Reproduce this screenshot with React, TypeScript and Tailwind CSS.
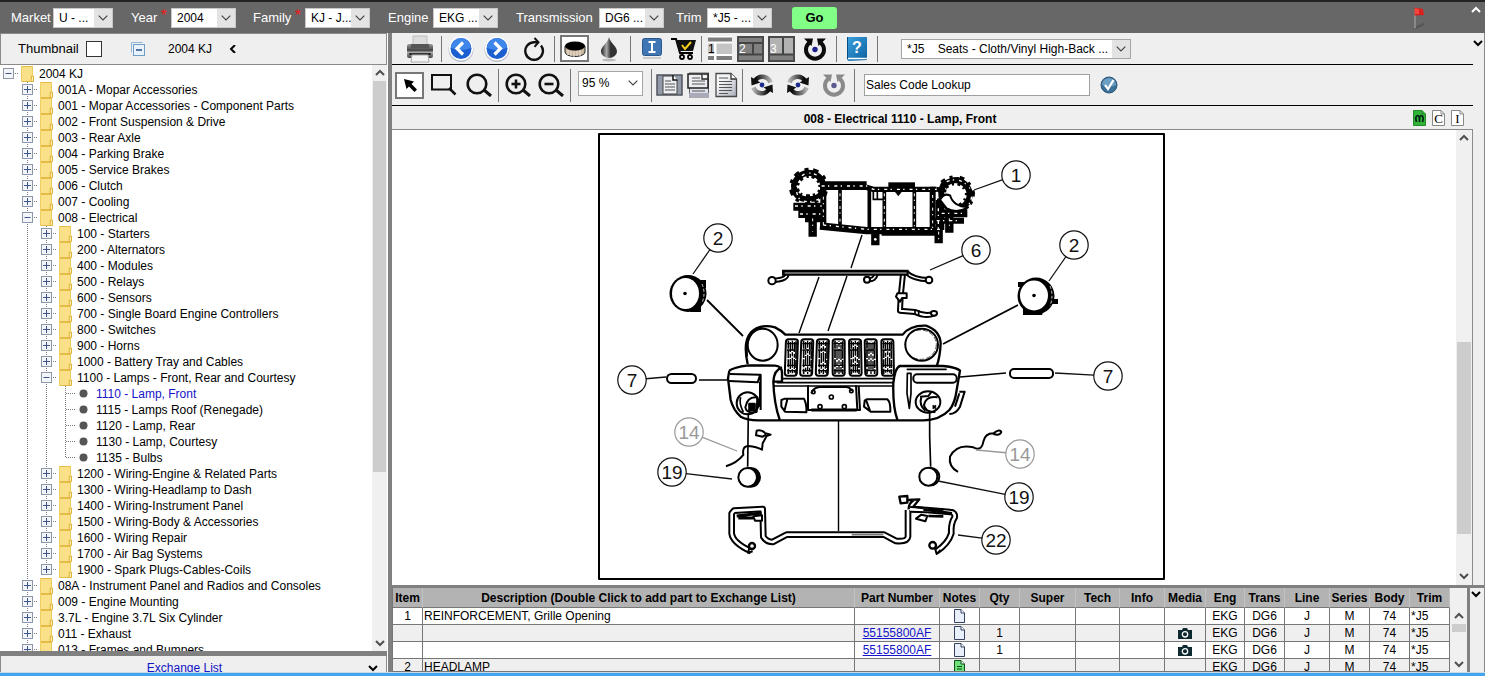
import React from "react";
import clsx from "clsx";

/* ---------- small shared pieces ---------- */

function Chevron({ dir, className }: { dir: "up" | "down" | "left"; className?: string }) {
  const d = dir === "up" ? "M1 6 L5 2 L9 6" : dir === "down" ? "M1 2 L5 6 L9 2" : "M7 0 L3 4 L7 8";
  return (
    <svg viewBox="0 0 10 8" className={clsx("h-2 w-[10px] shrink-0", className)} fill="none" stroke="currentColor" strokeWidth="2">
      <path d={d} />
    </svg>
  );
}

function Select({ label, value, className, plain, outlined }: { label: string; value: string; className: string; plain?: boolean; outlined?: boolean }) {
  return (
    <div className={clsx("relative shrink-0", className)}>
      <select
        id={label}
        aria-label={label}
        className={clsx(
          "h-full w-full appearance-none rounded-none border bg-white whitespace-pre",
          plain ? "pr-5 pl-[3px]" : "pr-4 pl-[5px]",
          plain || outlined ? "border-[#a5a5a5]" : "border-[#c8c8c8]"
        )}
      >
        <option>{value}</option>
      </select>
      <span
        className={clsx(
          "pointer-events-none absolute inset-y-px right-px flex w-[18px] items-center justify-center text-[#444]",
          plain ? "bg-white" : "bg-[#e3e3e3]"
        )}
      >
        <svg viewBox="0 0 10 6" className="h-[6px] w-[10px]" fill="none" stroke="currentColor" strokeWidth="1.2">
          <path d="M.7 .7 L5 5 L9.300 .7" />
        </svg>
      </span>
    </div>
  );
}

function Sep({ className }: { className: string }) {
  return <span className={clsx("w-px shrink-0 bg-[#777]", className)} />;
}

function Tool({ label, className, children }: { label: string; className: string; children: React.ReactNode }) {
  return (
    <button type="button" aria-label={label} className={clsx("flex shrink-0 items-center justify-center", className)}>
      {children}
    </button>
  );
}

/* ---------- filter bar ---------- */

const filters = [
  { label: "Market", value: "U - ...", text: "w-[42px]", box: "w-[60px]", gap: "ml-[11px]", req: false },
  { label: "Year", value: "2004", text: "w-[40px]", box: "w-[65px]", gap: "ml-[18px]", req: true },
  { label: "Family", value: "KJ - J...", text: "w-[52px]", box: "w-[65px]", gap: "ml-[17px]", req: true },
  { label: "Engine", value: "EKG ...", text: "w-[45px]", box: "w-[65px]", gap: "ml-[18px]", req: false },
  { label: "Transmission", value: "DG6 ...", text: "w-[83px]", box: "w-[65px]", gap: "ml-[18px]", req: false },
  { label: "Trim", value: "*J5 - ...", text: "w-[31px]", box: "w-[65px]", gap: "ml-3", req: false },
];

function FilterBar() {
  return (
    <header className="flex h-[33px] shrink-0 items-center border-t-2 border-[#222] bg-[#676767] text-white">
      {filters.map((f) => (
        <div key={f.label} className={clsx("flex items-center", f.gap)}>
          <label htmlFor={f.label} className={clsx("flex h-4 justify-between pr-1 text-[13px] leading-4 whitespace-nowrap", f.text)}>
            {f.label}
            {f.req && <span className="text-base leading-3 text-[#f01818]">*</span>}
          </label>
          <Select label={f.label} value={f.value} className={clsx("h-5 text-xs text-black", f.box)} />
        </div>
      ))}
      <button type="button" className="ml-5 h-[22px] w-[45px] rounded-[3px] bg-[#82ff86] text-[13px] font-bold text-black">
        Go
      </button>
      <button type="button" aria-label="Flag" className="mr-11 ml-auto">
        <svg viewBox="0 0 16 26" className="h-[26px] w-4">
          <path d="M4 23 L13 19" stroke="#555" strokeWidth="2" />
          <rect x="3" y="4" width="2" height="19" fill="#8a8a8a" />
          <path d="M3.500 2.500 L12 4 L13 10 L3.500 10.500 Z" fill="#d8201c" />
          <path d="M4 3 L8 4 L8 9 L4 9Z" fill="#f0443c" />
        </svg>
      </button>
      <button type="button" aria-label="Collapse" className="mr-1 mb-4">
        <Chevron dir="up" />
      </button>
    </header>
  );
}

/* ---------- catalogue tree ---------- */

type Row = { d: number; t: string; open?: boolean; last?: boolean; active?: boolean };
const rows: Row[] = [
  { d: 0, t: "2004 KJ", open: true },
  { d: 1, t: "001A - Mopar Accessories" },
  { d: 1, t: "001 - Mopar Accessories - Component Parts" },
  { d: 1, t: "002 - Front Suspension & Drive" },
  { d: 1, t: "003 - Rear Axle" },
  { d: 1, t: "004 - Parking Brake" },
  { d: 1, t: "005 - Service Brakes" },
  { d: 1, t: "006 - Clutch" },
  { d: 1, t: "007 - Cooling" },
  { d: 1, t: "008 - Electrical", open: true },
  { d: 2, t: "100 - Starters" },
  { d: 2, t: "200 - Alternators" },
  { d: 2, t: "400 - Modules" },
  { d: 2, t: "500 - Relays" },
  { d: 2, t: "600 - Sensors" },
  { d: 2, t: "700 - Single Board Engine Controllers" },
  { d: 2, t: "800 - Switches" },
  { d: 2, t: "900 - Horns" },
  { d: 2, t: "1000 - Battery Tray and Cables" },
  { d: 2, t: "1100 - Lamps - Front, Rear and Courtesy", open: true },
  { d: 3, t: "1110 - Lamp, Front", active: true },
  { d: 3, t: "1115 - Lamps Roof (Renegade)" },
  { d: 3, t: "1120 - Lamp, Rear" },
  { d: 3, t: "1130 - Lamp, Courtesy" },
  { d: 3, t: "1135 - Bulbs", last: true },
  { d: 2, t: "1200 - Wiring-Engine & Related Parts" },
  { d: 2, t: "1300 - Wiring-Headlamp to Dash" },
  { d: 2, t: "1400 - Wiring-Instrument Panel" },
  { d: 2, t: "1500 - Wiring-Body & Accessories" },
  { d: 2, t: "1600 - Wiring Repair" },
  { d: 2, t: "1700 - Air Bag Systems" },
  { d: 2, t: "1900 - Spark Plugs-Cables-Coils", last: true },
  { d: 1, t: "08A - Instrument Panel and Radios and Consoles" },
  { d: 1, t: "009 - Engine Mounting" },
  { d: 1, t: "3.7L - Engine 3.7L Six Cylinder" },
  { d: 1, t: "011 - Exhaust" },
  { d: 1, t: "013 - Frames and Bumpers" },
];

const dots = { stroke: "#777", strokeWidth: 1, strokeDasharray: "1 1" };

function TreeRow({ row }: { row: Row }) {
  const leaf = row.d === 3;
  return (
    <li className="flex h-4 items-center">
      {Array.from({ length: row.d }, (_, i) => (
        <svg key={i} viewBox="0 0 19 16" className="h-4 w-[19px] shrink-0">
          {i > 0 && <path d="M8.500 0 V16" {...dots} />}
        </svg>
      ))}
      <svg viewBox="0 0 19 16" className="h-4 w-[19px] shrink-0" fill="none">
        {row.d > 0 && <path d={row.last ? "M8.500 0 V8" : "M8.500 0 V16"} {...dots} />}
        <path d="M9 7.500 H19" {...dots} />
        {!leaf && (
          <>
            <rect x="3.500" y="2.500" width="10" height="10" fill="#f3f5f8" stroke="#8c98a8" />
            <path d={row.open ? "M5.500 7.500 H11.500" : "M5 7.500 H12 M8.500 4 V11"} stroke="#3c568a" />
          </>
        )}
      </svg>
      {leaf ? (
        <svg viewBox="0 0 20 16" className="h-4 w-5 shrink-0">
          <circle cx="7.500" cy="7.500" r="4" fill="#555" />
        </svg>
      ) : (
        <svg viewBox="0 0 20 16" className="h-4 w-5 shrink-0">
          <rect x="2" y="0" width="12" height="15.500" fill="#fbe08a" />
          <path d="M2 .5 H14 M2 15.500 H14" stroke="#e3bd45" />
          <path d="M2.500 0 V16" stroke="#f0cf62" />
          <path d="M12 15.500 L12.500 10 L14.500 10 V15.500 Z" fill="#fdeeb4" stroke="#dcb236" />
          <path d="M13.500 0 V10" stroke="#ecca5c" />
        </svg>
      )}
      <a href="#tree" className={clsx("whitespace-nowrap", row.active ? "text-[#1414c8]" : "text-black")}>
        {row.t}
      </a>
    </li>
  );
}

function Sidebar() {
  return (
    <aside className="flex w-[387px] shrink-0 flex-col">
      <div className="flex h-8 shrink-0 items-center border border-[#8a8a8a] bg-[#efefef] pl-[17px] text-[13px]">
        <label htmlFor="thumb" className="w-[68px] text-[13px]">Thumbnail</label>
        <input id="thumb" type="checkbox" className="size-4 appearance-none border border-[#333] bg-white" />
        <button type="button" aria-label="Collapse all" className="ml-[29px]">
          <svg viewBox="0 0 14 14" className="size-[14px]" fill="none">
            <path d="M.5 10.500 V.5 H11.500" stroke="#8fb8d8" />
            <rect x="2.500" y="2.500" width="11" height="11" fill="#e8f3fb" stroke="#6f9fc6" />
            <path d="M5 8 H11" stroke="#1f4d8a" strokeWidth="1.500" />
          </svg>
        </button>
        <span className="ml-[23px] w-[60px] text-xs">2004 KJ</span>
        <button type="button" aria-label="Hide tree">
          <Chevron dir="left" />
        </button>
      </div>
      <div className="flex min-h-0 flex-1">
        <ul className="min-w-0 flex-1 overflow-hidden bg-white pt-px text-xs">
          {rows.map((r) => (
            <TreeRow key={r.t} row={r} />
          ))}
        </ul>
        <div className="flex w-[15px] shrink-0 flex-col items-center bg-[#f0f0f0] text-[#505050]">
          <Chevron dir="up" className="my-1" />
          <div className="w-[13px] basis-[391px] bg-[#cdcdcd]" />
          <Chevron dir="down" className="mt-auto mb-1" />
        </div>
      </div>
      <div className="h-[5px] shrink-0 bg-[#808080]" />
      <div className="flex h-4 shrink-0 items-start overflow-hidden border-x border-[#8a8a8a] bg-[#efefef] pr-2 text-xs">
        <a href="#exchange" className="flex-1 pt-1 text-center leading-4 text-[#1414c8]">
          Exchange List
        </a>
        <button type="button" aria-label="Expand list" className="pt-2">
          <Chevron dir="down" />
        </button>
      </div>
    </aside>
  );
}

/* ---------- toolbar icons ---------- */

function RoundArrow({ flip }: { flip?: boolean }) {
  return (
    <svg viewBox="0 0 26 26" className="size-[26px]">
      <circle cx="13" cy="13.500" r="12.500" fill="#b9c0cc" />
      <circle cx="13" cy="12.500" r="12" fill="#fff" />
      <circle cx="13" cy="12.500" r="10.500" fill="#1c5fd0" />
      <path d="M3 12 A10 10 0 0 1 23 12 Q13 16 3 12Z" fill="#3f86ea" />
      <path d={flip ? "M10.500 6.500 L16.500 12.500 L10.500 18.500" : "M15 6.500 L9 12.500 L15 18.500"} fill="none" stroke="#fff" strokeWidth="3.200" />
    </svg>
  );
}

function UTurn({ color, dot }: { color: string; dot: string }) {
  return (
    <svg viewBox="0 0 24 24" className="size-6">
      <path d="M6 6 A9 9 0 1 0 18 6" fill="none" stroke={color} strokeWidth="4" />
      <path d="M1 1.500 H10 L8.500 9 Z M23 1.500 H14 L15.500 9 Z" fill={color} />
      <circle cx="12" cy="12.500" r="2.700" fill={dot} />
    </svg>
  );
}

function TwinTurn({ cw, id }: { cw?: boolean; id: string }) {
  return (
    <svg viewBox="0 0 24 24" className="size-6">
      <defs>
        <linearGradient id={id} x1="0" x2="1">
          <stop offset="0" stopColor="#000" />
          <stop offset="1" stopColor="#b0b0b0" />
        </linearGradient>
        <linearGradient id={id + "b"} x1="0" x2="1">
          <stop offset="0" stopColor="#b0b0b0" />
          <stop offset="1" stopColor="#000" />
        </linearGradient>
      </defs>
      <g transform={cw ? "translate(24 0) scale(-1 1)" : undefined}>
        <path d="M5 8 A8.500 8.500 0 0 1 20.500 9.500" fill="none" stroke={`url(#${id})`} strokeWidth="4.500" />
        <path d="M1 4 L1.500 12.500 L10.500 9.500 Z" fill="#111" />
        <path d="M19 16 A8.500 8.500 0 0 1 3.500 14.500" fill="none" stroke={`url(#${id}b)`} strokeWidth="4.500" />
        <path d="M23 20 L22.500 11.500 L13.500 14.500 Z" fill="#111" />
      </g>
      <circle cx="12" cy="12" r="2.400" fill="#1c2c8c" />
    </svg>
  );
}

function Lens({ sign }: { sign?: "plus" | "minus" }) {
  return (
    <svg viewBox="0 0 26 24" className="h-6 w-[26px]" fill="none" stroke="#111" strokeWidth="2.600">
      <circle cx="11" cy="11" r="9.300" />
      <path d="M18 17 L25 23" strokeWidth="3" />
      {sign && <path d="M6.500 11 H15.500" />}
      {sign === "plus" && <path d="M11 6.500 V15.500" />}
    </svg>
  );
}

function DocWide() {
  return (
    <svg viewBox="0 0 27 24" className="h-6 w-[27px]" fill="none">
      <rect x="1" y="2" width="25" height="20" fill="#9299a8" stroke="#50545c" strokeWidth="1.500" />
      <path d="M7 3 H17 L21 7 V21 H7Z" fill="#eceef2" stroke="#444" />
      <path d="M17 2 V7 H21.500" fill="#fff" stroke="#111" strokeWidth="1.500" />
      <path d="M9 8 H15 M9 11 H19 M9 14 H19 M9 17 H19" stroke="#555" strokeWidth="1.200" />
    </svg>
  );
}

function DocTall() {
  return (
    <svg viewBox="0 0 23 26" className="h-[26px] w-[23px]" fill="none">
      <rect x="2.500" y="1" width="19" height="24" fill="#dfe1e8" stroke="#666" />
      <path d="M2 21 H22 V25 H2Z" fill="#aab" />
      <path d="M1 2 H21 V16 H1Z" fill="#eceef2" stroke="#222" strokeWidth="1.500" />
      <path d="M15 2 V7 H21" fill="#fff" stroke="#222" strokeWidth="1.300" />
      <path d="M5 6 H13 M5 9 H18 M5 12 H18 M5 19 H18" stroke="#555" strokeWidth="1.200" />
    </svg>
  );
}

function DocPage() {
  return (
    <svg viewBox="0 0 24 26" className="h-[26px] w-6" fill="none">
      <defs>
        <linearGradient id="pg" x2="1" y2="1">
          <stop offset=".3" stopColor="#f6f7f9" />
          <stop offset="1" stopColor="#a9aebb" />
        </linearGradient>
      </defs>
      <path d="M2 1.500 H17 L22.500 7 V24.500 H2Z" fill="url(#pg)" stroke="#4a4a4a" strokeWidth="1.300" />
      <path d="M17 1.500 V7 H22.500" fill="#fff" stroke="#333" strokeWidth="1.300" />
      <path d="M5 6 H14 M5 9.500 H18 M5 12.500 H18 M5 15.500 H18 M5 18.500 H18 M5 21.500 H14" stroke="#555" />
    </svg>
  );
}

function ToolbarOne() {
  return (
    <div className="flex h-8 shrink-0 items-center border-b border-black">
      <Tool label="Print" className="ml-[14px] w-7">
        <svg viewBox="0 0 28 28" className="size-7">
          <defs>
            <linearGradient id="pr" x2="0" y2="1">
              <stop offset="0" stopColor="#999" />
              <stop offset=".45" stopColor="#444" />
              <stop offset=".6" stopColor="#aaa" />
              <stop offset="1" stopColor="#444" />
            </linearGradient>
          </defs>
          <path d="M7 1 H21 V11 H7Z" fill="#ddd" stroke="#bbb" />
          <rect x="1" y="9" width="26" height="14" rx="2" fill="url(#pr)" />
          <path d="M5 9 H23 V13 H5Z" fill="#555" />
          <path d="M3 19 H25" stroke="#333" strokeWidth="2" />
          <path d="M6 20 H22 L23 27 H5Z" fill="#f4f4f4" stroke="#aaa" />
        </svg>
      </Tool>
      <Sep className="ml-[7px] h-[26px]" />
      <Tool label="Back" className="ml-[6px]"><RoundArrow /></Tool>
      <Tool label="Forward" className="ml-[10px]"><RoundArrow flip /></Tool>
      <Tool label="Reload" className="ml-[13px]">
        <svg viewBox="0 0 22 24" className="h-6 w-[22px]" fill="none" stroke="#111" strokeWidth="2.400">
          <path d="M18 8.500 A8.800 8.800 0 1 1 10.500 5.200 L15 5.200" />
          <path d="M11.500 1 L15.500 5.200 L11.500 9.800" strokeWidth="2" />
        </svg>
      </Tool>
      <Sep className="ml-[9px] h-[26px]" />
      <Tool label="Filters" className="ml-[5px] h-[27px] w-[29px] border-2 border-[#777] bg-white">
        <svg viewBox="0 0 24 18" className="h-[18px] w-6">
          <path d="M2 6 V12 A10 4.500 0 0 0 22 12 V6Z" fill="#c9b79f" stroke="#222" />
          <path d="M5 10 V15 M8 11 V16 M11 11 V17 M14 11 V16 M17 10 V16" stroke="#f2e9dc" />
          <ellipse cx="12" cy="6" rx="10" ry="4.500" fill="#000" />
        </svg>
      </Tool>
      <Tool label="Fluids" className="ml-[11px] w-[18px]">
        <svg viewBox="0 0 18 26" className="h-[26px] w-[18px]">
          <defs>
            <linearGradient id="dr" x2="1">
              <stop offset="0" stopColor="#222" />
              <stop offset=".35" stopColor="#aaa" />
              <stop offset=".6" stopColor="#333" />
            </linearGradient>
          </defs>
          <ellipse cx="9" cy="24" rx="7" ry="1.500" fill="#bbb" />
          <path d="M9 1 C10 7 17 10 17 15.500 A8 6.500 0 0 1 1 15.500 C1 10 8 7 9 1Z" fill="url(#dr)" />
        </svg>
      </Tool>
      <Sep className="ml-3 h-[26px]" />
      <Tool label="Information" className="ml-[11px] w-5">
        <svg viewBox="0 0 20 24" className="h-6 w-5">
          <rect x="1" y="20" width="18" height="2" fill="#ccc" />
          <rect x=".5" y="1.500" width="19" height="17" rx="2" fill="#4076b4" stroke="#2b578f" />
          <path d="M6.500 5 H13.500 M10 5 V15 M6.500 15 H13.500" stroke="#fff" strokeWidth="2" fill="none" />
        </svg>
      </Tool>
      <Tool label="Cart" className="ml-[9px] w-[26px]">
        <svg viewBox="0 0 26 24" className="h-6 w-[26px]">
          <path d="M0 2 H5 L9 16 H22" fill="none" stroke="#000" strokeWidth="2" />
          <path d="M5 3 H25 L22 14 H8Z" fill="#111" />
          <path d="M11 8 L14 12 L20 5" fill="none" stroke="#f4d020" strokeWidth="2" />
          <circle cx="11" cy="20" r="2" fill="#fff" stroke="#000" strokeWidth="1.800" />
          <circle cx="19" cy="20" r="2" fill="#fff" stroke="#000" strokeWidth="1.800" />
        </svg>
      </Tool>
      <Sep className="ml-1 h-[26px]" />
      <Tool label="Layout 1" className="ml-[6px] w-6">
        <svg viewBox="0 0 24 26" className="h-[26px] w-6">
          <rect width="24" height="26" fill="#fff" />
          <path d="M0 1.500 H24 V5.500 H0Z M0 20 H6 V24 H0Z M8.500 20 H24 V24 H8.500Z" fill="#7d7d7d" />
          <path d="M0 7.500 H6 V18 H0Z M8.500 7.500 H24 V18 H8.500Z" fill="#c4c4c4" />
          <text x="0" y="17" fontSize="12" fontFamily="Liberation Sans">1</text>
        </svg>
      </Tool>
      <Tool label="Layout 2" className="ml-[5px] w-[27px]">
        <svg viewBox="0 0 27 26" className="h-[26px] w-[27px]">
          <rect x="1" y="1" width="25" height="24" fill="#808080" stroke="#4a4a4a" strokeWidth="2" />
          <path d="M2 7 H25 M2 18.500 H25 M16 7 V18.500" stroke="#444" strokeWidth="2" />
          <text x="2" y="17" fontSize="12" fill="#fff" fontFamily="Liberation Sans">2</text>
        </svg>
      </Tool>
      <Tool label="Layout 3" className="ml-1 w-[27px]">
        <svg viewBox="0 0 27 26" className="h-[26px] w-[27px]">
          <rect x="1" y="1" width="25" height="24" fill="#b2b2b2" stroke="#4a4a4a" strokeWidth="2" />
          <path d="M2 19 H25 V24 H2Z" fill="#808080" />
          <path d="M2 18.500 H25 M15 2 V18.500" stroke="#444" strokeWidth="2" />
          <text x="2" y="17" fontSize="12" fill="#fff" fontFamily="Liberation Sans">3</text>
        </svg>
      </Tool>
      <Tool label="Reset layout" className="ml-2"><UTurn color="#0c0c0c" dot="#20208c" /></Tool>
      <Sep className="ml-[9px] h-[26px]" />
      <Tool label="Help" className="ml-[9px] w-[22px]">
        <svg viewBox="0 0 22 26" className="h-[26px] w-[22px]">
          <defs>
            <linearGradient id="hp" x2="1" y2="1">
              <stop offset="0" stopColor="#3da2de" />
              <stop offset="1" stopColor="#0b5f9f" />
            </linearGradient>
          </defs>
          <path d="M1 1 H21 V24 L3 25 Q1 25 1 22Z" fill="url(#hp)" />
          <path d="M2 22.500 H21" stroke="#fff" strokeWidth="1.500" />
          <path d="M1.500 1 V23" stroke="#0a4a7d" />
          <text x="11" y="17" textAnchor="middle" fontSize="16" fontWeight="700" fill="#fff" fontFamily="Liberation Sans">?</text>
        </svg>
      </Tool>
      <Sep className="ml-[9px] h-[26px]" />
      <Select outlined label="Option" value={"*J5\u00a0\u00a0\u00a0\u00a0Seats - Cloth/Vinyl High-Back ..."} className="ml-[23px] h-5 w-[230px] text-xs" />
    </div>
  );
}

function ToolbarTwo() {
  return (
    <div className="flex h-[41px] shrink-0 items-center border-b border-black">
      <Tool label="Pointer" className="ml-[3px] h-[27px] w-[29px] border-2 border-[#777] bg-white">
        <svg viewBox="0 0 14 14" className="size-[14px]">
          <path d="M1 1 L11 3.500 L8.500 6 L14 11.500 L11.500 14 L6 8.500 L3.500 11Z" fill="#000" />
        </svg>
      </Tool>
      <Tool label="Zoom area" className="ml-[7px] w-[26px]">
        <svg viewBox="0 0 26 24" className="h-6 w-[26px]" fill="none" stroke="#111" strokeWidth="2">
          <rect x="1" y="2" width="19" height="14.500" />
          <path d="M18 15 L24.500 21.500" strokeWidth="2.500" />
        </svg>
      </Tool>
      <Tool label="Magnify" className="ml-[9px]"><Lens /></Tool>
      <Sep className="ml-[6px] h-[33px]" />
      <Tool label="Zoom in" className="ml-[6px]"><Lens sign="plus" /></Tool>
      <Tool label="Zoom out" className="ml-[7px]"><Lens sign="minus" /></Tool>
      <Sep className="ml-[6px] h-[33px]" />
      <div className="ml-[7px] pb-1">
        <Select plain label="Zoom level" value="95 %" className="h-[25px] w-[65px] text-xs" />
      </div>
      <Sep className="ml-2 h-[33px]" />
      <Tool label="Fit width" className="ml-1"><DocWide /></Tool>
      <Tool label="Fit height" className="ml-1"><DocTall /></Tool>
      <Tool label="Fit page" className="ml-1"><DocPage /></Tool>
      <Sep className="ml-1 h-[33px]" />
      <Tool label="Rotate left" className="ml-[7px]"><TwinTurn id="ta" /></Tool>
      <Tool label="Rotate right" className="ml-3"><TwinTurn cw id="tb" /></Tool>
      <Tool label="Reset rotation" className="ml-3"><UTurn color="#8a8a8a" dot="#5a5a90" /></Tool>
      <Sep className="ml-2 h-[33px]" />
      <input aria-label="Sales Code Lookup" defaultValue="Sales Code Lookup" className="ml-[9px] h-[22px] w-[226px] border border-[#a0a0a0] bg-white px-px text-xs" />
      <Tool label="Look up" className="ml-[10px] w-[18px]">
        <svg viewBox="0 0 18 18" className="size-[18px]">
          <circle cx="9" cy="9" r="8" fill="#3b7099" stroke="#2c5676" />
          <path d="M2 9 A7 7 0 0 1 16 9 Q9 12 2 9Z" fill="#6c9fc4" />
          <path d="M5 9 L8 13 L13.500 4" fill="none" stroke="#fff" strokeWidth="2.200" />
        </svg>
      </Tool>
    </div>
  );
}

/* ---------- exploded view ---------- */

const callouts = [
  { n: "1", x: 1016, y: 175, to: [974, 190] },
  { n: "2", x: 718, y: 238, to: [693, 274] },
  { n: "2", x: 1074, y: 245, to: [1049, 281] },
  { n: "6", x: 976, y: 250, to: [930, 270] },
  { n: "7", x: 632, y: 380, to: [666, 377] },
  { n: "7", x: 1108, y: 376, to: [1055, 373] },
  { n: "14", x: 689, y: 432, to: [737, 451], dim: true },
  { n: "14", x: 1020, y: 454, to: [976, 450], dim: true },
  { n: "19", x: 672, y: 472, to: [732, 479] },
  { n: "19", x: 1019, y: 497, to: [938, 481] },
  { n: "22", x: 996, y: 540, to: [958, 535] },
];

function Tube({ d, w = 18 }: { d: string; w?: number }) {
  return (
    <>
      <path d={d} strokeWidth={w} stroke="#000" />
      <path d={d} strokeWidth={w - 12} stroke="#fff" />
    </>
  );
}

const ringLeft = "M246 92 Q232 68 205 68 Q172 72 162 105 Q160 135 185 145 Q225 155 246 130 Q254 110 246 92Z";
const ringRight = "M610 105 Q630 90 652 90 Q682 98 690 130 Q688 165 655 178 Q630 172 608 150 Q598 128 610 105Z";

function Reinforcement() {
  return (
    <g transform="translate(740 150) scale(.33333)">
      <g strokeWidth="18">
        <path d={ringLeft} />
        <path d={ringRight} />
        <path d={ringLeft} strokeWidth="30" strokeDasharray="9 15 14 11" />
        <path d={ringRight} strokeWidth="30" strokeDasharray="12 13 8 16" />
        <path d="M160 170 H245 M175 192 H250 M600 190 H682" strokeWidth="24" />
        <path d="M195 208 H255 M585 212 H672" strokeWidth="18" />
        <path d="M240 100 H380" strokeWidth="12" />
        <path d="M240 112 H380 L400 118 H590" strokeWidth="16" />
        <path d="M240 228 L380 242 L600 242" strokeWidth="22" />
        <path d="M425 252 H590" strokeWidth="10" />
        <path d="M250 120 V230 M300 120 V225 M388 115 V240 M433 120 V240 M523 115 V240" strokeWidth="11" />
        <path d="M250 120 V230 M578 110 V250" strokeWidth="18" />
        <path d="M218 200 V260 M406 245 V286 M596 230 V280 M628 200 V248" strokeWidth="25" />
        <path d="M600 150 V240" strokeWidth="26" />
        <path d="M445 104 H525" strokeWidth="14" />
        <path d="M398 148 H430 M400 125 V150 M412 125 V150" strokeWidth="5" />
      </g>
      <g stroke="#fff" strokeWidth="4" strokeDasharray="9 10 4 15">
        <path d="M180 90 Q160 120 180 150 Q210 162 240 145 M230 75 Q205 62 185 78" />
        <path d="M620 95 Q660 78 690 115 M695 140 Q690 170 665 182" />
        <path d="M245 108 H380 L400 118 H590 M250 225 L380 238 H600" />
        <path d="M165 168 H245 M180 192 H250 M595 175 V240 M605 190 H680 M590 212 H665" />
        <path d="M300 130 V220 M433 130 V230 M523 130 V230 M218 205 V245 M628 205 V235 M596 245 V270 M250 140 V230 M578 135 V235" strokeWidth="3" />
      </g>
      <path d="M600 150 Q610 128 630 136 Q640 170 684 172 Q650 192 620 175Z" fill="#fff" strokeWidth="6" />
      <path d="M465 125 L475 138 L485 125Z" fill="#000" />
      <circle cx="406" cy="268" r="4" fill="#fff" stroke="none" />
    </g>
  );
}

function Diagram() {
  return (
    <svg viewBox="598 133 567 447" className="h-[447px] w-[567px] shrink-0" fill="none" stroke="#000" strokeLinejoin="round">
      <rect x="599" y="134" width="565" height="445" fill="#fff" strokeWidth="2" />

      {/* leader lines between parts */}
      <path d="M862 235 L851 268 M847 276 L828 331 M819 277 L799 333 M838.500 421 V531" strokeWidth="1.400" />
      <path d="M707 300 L743 336 M1018 305 L943 344" strokeWidth="1.800" />
      <path d="M699 380 H727 M960 377 L1006 373" strokeWidth="1.500" />

      {/* 1: grille opening reinforcement */}
      <Reinforcement />

      {/* 6: upper harness */}
      <g transform="translate(740 150) scale(.33333)">
        <Tube w={16} d="M140 370 Q145 388 100 391 M408 372 Q404 392 385 388 M500 368 Q520 388 565 389" />
        <Tube w={18} d="M489 372 L482 440 L480 482 L525 486 Q560 502 582 490" />
        <path d="M126 368 H506" strokeWidth="18" />
        <path d="M134 369 H500" stroke="#888" strokeWidth="4" />
        <path d="M472 430 H500 V444 H486 L480 455 L468 440Z" fill="#fff" strokeWidth="6" />
        <path d="M525 478 V492 M536 480 V496" strokeWidth="5" />
        <g fill="#fff" strokeWidth="6">
          <circle cx="96" cy="392" r="11" />
          <circle cx="381" cy="389" r="9" />
          <circle cx="567" cy="390" r="10" />
          <ellipse cx="582" cy="490" rx="9" ry="7" />
        </g>
      </g>

      {/* 2: headlamps */}
      <g fill="#000" stroke="none">
        <path d="M700 280 H706 V288 H700Z M694 304 H701 V312 H690Z M1018 282 H1027 V287 H1018Z M1023 306 H1030 V315 H1023Z M1050 299 H1058 V304 H1050Z" />
        <ellipse cx="688" cy="293.500" rx="18.500" ry="18.500" />
        <ellipse cx="1036" cy="296" rx="18.500" ry="18.500" />
        <path d="M1025 309 L1044 309 L1042 315 H1027Z" />
      </g>
      <ellipse cx="685.500" cy="293.500" rx="13.500" ry="15.500" fill="#fff" stroke="none" />
      <ellipse cx="1034" cy="295.500" rx="14" ry="15" fill="#fff" stroke="none" />
      <path d="M702 284 Q706 293 702 303 M1050 286 Q1054 295 1050 306" stroke="#fff" strokeWidth=".8" strokeDasharray="3 2" />
      <circle cx="685" cy="293.500" r="1.800" fill="#000" stroke="none" />
      <circle cx="1034" cy="295.500" r="1.800" fill="#000" stroke="none" />

      {/* 7: side markers */}
      <rect x="667" y="374" width="29" height="9" rx="4.500" strokeWidth="2" />
      <rect x="1010" y="369" width="43" height="9" rx="4" strokeWidth="2" />

      {/* front fascia */}
      <g transform="translate(710 310) scale(.33333)" strokeWidth="7">
        <path d="M113 162 Q98 95 122 68 Q150 40 195 52 Q212 60 226 74 H578 Q600 45 648 47 Q690 62 692 100 Q690 140 681 166" />
        <ellipse cx="158" cy="104" rx="45" ry="48" strokeWidth="6" />
        <path d="M112 140 Q106 70 150 55" strokeWidth="4" />
        <ellipse cx="635" cy="104" rx="49" ry="48" strokeWidth="6" />
        <ellipse cx="632" cy="104" rx="47" ry="44" strokeWidth="2" strokeDasharray="14 6" />
        {[227, 273, 320, 367, 416, 463, 513].map((x, i) => (
          <g key={x} transform={`translate(${x} 88)`}>
            <rect x="1" y="0" width="36" height="109" rx="8" strokeWidth="6" transform={i < 3 ? "skewX(-2)" : i > 3 ? "skewX(1)" : undefined} />
            <path d="M8 4 V104 M31 6 V104" strokeWidth="5" strokeDasharray="24 4" />
            <path d="M14 8 V100 M20 4 V104 M26 8 V100" strokeWidth="4" strokeDasharray="30 5 12 4" strokeDashoffset={i * 9} />
            <path d="M4 13 H34 M4 32 H34 M4 78 H34 M4 94 H34" strokeWidth="4" />
          </g>
        ))}
        <path d="M216 206 H552 M200 218 H550 M190 228 H550" strokeWidth="5" />
        <path d="M58 182 Q70 172 115 166 L195 167 Q216 168 216 190 V215 H190 Q192 180 216 172 M58 182 L54 205 L62 270 Q70 300 92 320 Q110 330 145 331 H640 Q690 330 718 300 Q735 280 740 240 L750 182 Q740 172 700 168 H570 Q555 172 550 220 Q548 290 562 329 M190 215 Q192 280 209 329" />
        <path d="M60 192 L152 194 V300 M57 213 L143 217 L150 196 M150 215 V290" strokeWidth="6" />
        <path d="M590 178 H710 M592 190 H603 V250 L598 295 L591 250Z" strokeWidth="5" />
        <rect x="610" y="193" width="130" height="25" rx="11" strokeWidth="6" />
        <path d="M748 245 H764 L750 290 Q738 312 718 312 M748 250 L735 290" strokeWidth="6" />
        <path d="M294 226 V300 H442 L438 226" strokeWidth="6" />
        <path d="M304 250 Q310 232 330 231 H410 Q422 233 424 243 M446 228 L450 300 H440" strokeWidth="6" />
        <g strokeWidth="5">
          <circle cx="310" cy="246" r="5" /><circle cx="424" cy="243" r="5" /><circle cx="364" cy="261" r="6" />
          <circle cx="330" cy="290" r="6" /><circle cx="403" cy="290" r="6" />
        </g>
        <path d="M225 266 H282 Q291 285 289 307 L225 305 L214 290 V270Z M232 268 L224 300 M470 268 H532 Q542 275 541 305 H482 L462 290 L464 272Z M468 270 L480 302" strokeWidth="6" />
        <path d="M304 300 H440" strokeWidth="9" />
        <circle cx="113" cy="280" r="33" strokeWidth="6" />
        <path d="M142 262 Q112 258 106 292 Q110 312 140 306 Z" strokeWidth="6" />
        <path d="M92 262 Q86 280 100 306" strokeWidth="5" />
        <path d="M118 282 H134 V300 H118Z" fill="#000" />
        <ellipse cx="654" cy="276" rx="37" ry="32" strokeWidth="6" />
        <path d="M683 262 Q648 256 642 285 Q646 308 676 306 M630 260 L655 258 L665 245 M634 262 Q626 285 646 302" strokeWidth="6" />
        <path d="M668 286 L678 296 M678 286 L668 296" strokeWidth="5" />
        <path d="M115 310 L113 470 M659 306 V380 L662 470" strokeWidth="5" />
      </g>

      {/* 14, 19 and 22: wires, bulbs, lower harness */}
      <g transform="translate(590 410) scale(.33333)">
        <path d="M408 169 Q440 160 460 135 Q456 108 475 108 Q500 110 516 119 L518 100 L530 78 L542 74 L526 70 Q515 58 500 62 L498 76 L518 80 L528 74" strokeWidth="6" />
        <path d="M1104 186 Q1075 170 1080 140 Q1100 100 1150 112 Q1175 125 1180 95 Q1185 70 1210 70 Q1230 55 1234 66 Q1230 78 1210 72" strokeWidth="6" />
        <circle cx="482" cy="202" r="27" strokeWidth="8" />
        <path d="M495 178 Q510 202 495 226" strokeWidth="10" />
        <circle cx="473" cy="202" r="28" fill="#fff" strokeWidth="6" />
        <circle cx="1022" cy="200" r="26" strokeWidth="6" />
        <circle cx="1015" cy="200" r="27" fill="#fff" strokeWidth="6" />
        <Tube w={20} d="M484 424 Q428 398 425 370 V310 L432 302 L518 297 L520 380 Q530 396 548 396 L590 374 H882 L918 393 Q952 396 954 380 V300" />
        <Tube w={20} d="M1040 424 Q1075 400 1084 370 Q1082 340 1094 322 Q1096 306 1080 306 L1010 300 L960 298" />
        <path d="M440 318 L515 309 M445 324 H490" strokeWidth="9" />
        <path d="M490 319 L516 316 V332 H495Z M994 314 L1012 318 L1006 334 L978 326Z" fill="#fff" strokeWidth="6" />
        <path d="M1000 298 L1086 310 M1015 318 L1060 319 M1025 298 H1060" strokeWidth="8" />
        <path d="M928 260 L952 258 V278 L932 280Z" fill="#fff" strokeWidth="7" />
        <path d="M954 270 L988 268 L970 290 L1000 294 M956 298 Q955 280 972 270" strokeWidth="7" />
        <circle cx="486" cy="408" r="9" fill="#fff" strokeWidth="7" />
        <path d="M478 414 L474 428 L488 424 M1034 412 L1040 432 L1052 420" strokeWidth="6" />
        <circle cx="1028" cy="406" r="10" fill="#fff" strokeWidth="7" />
        <path d="M785 374 H880" stroke="#777" strokeWidth="5" />
      </g>

      {callouts.map((c, i) => {
        const dx = c.to[0] - c.x;
        const dy = c.to[1] - c.y;
        const len = Math.hypot(dx, dy);
        const col = c.dim ? "#999" : "#111";
        return (
          <g key={i}>
            <path d={`M${c.x + (dx / len) * 14} ${c.y + (dy / len) * 14} L${c.to[0]} ${c.to[1]}`} stroke={col} strokeWidth="1.300" />
            <circle cx={c.x} cy={c.y} r="14.200" stroke={col} strokeWidth="1.200" />
            <text x={c.x} y={c.y + 7} textAnchor="middle" fontSize="19" fill={col} stroke="none" fontFamily="Liberation Sans, Arial, sans-serif">
              {c.n}
            </text>
          </g>
        );
      })}
    </svg>
  );
}

function Badge({ letter, green }: { letter: string; green?: boolean }) {
  return (
    <svg viewBox="0 0 13 16" className="h-4 w-[13px] shrink-0">
      <path d="M.5 .5 H9 L12.500 4 V15.500 H.5Z" fill={green ? "#32b43a" : "#fff"} stroke={green ? "#238a2a" : "#888"} />
      <path d="M9 .5 V4 H12.500" fill="none" stroke={green ? "#238a2a" : "#888"} />
      {green ? (
        <path d="M3.500 12 Q1.500 6 5 5.500 Q6.500 5.500 6.500 12 M6.500 12 Q6.500 5.500 8 5.500 Q11.500 6 9.500 12" fill="none" stroke="#021" strokeWidth="1.700" />
      ) : (
        <text x="6.500" y="13" textAnchor="middle" fontSize="13" fontFamily="Liberation Serif">{letter}</text>
      )}
    </svg>
  );
}

/* ---------- parts table ---------- */

const columns = [
  { t: "Item", w: "w-[30px]" },
  { t: "Description (Double Click to add part to Exchange List)", w: "" },
  { t: "Part Number", w: "w-[85px]" },
  { t: "Notes", w: "w-[40px]" },
  { t: "Qty", w: "w-[40px]" },
  { t: "Super", w: "w-[56px]" },
  { t: "Tech", w: "w-[44px]" },
  { t: "Info", w: "w-[45px]" },
  { t: "Media", w: "w-[41px]" },
  { t: "Eng", w: "w-[39px]" },
  { t: "Trans", w: "w-[40px]" },
  { t: "Line", w: "w-[45px]" },
  { t: "Series", w: "w-[40px]" },
  { t: "Body", w: "w-[40px]" },
  { t: "Trim", w: "w-[40px]" },
];

const parts = [
  { item: "1", desc: "REINFORCEMENT, Grille Opening", part: "", qty: "", green: false },
  { item: "", desc: "", part: "55155800AF", qty: "1", green: false },
  { item: "", desc: "", part: "55155800AF", qty: "1", green: false },
  { item: "2", desc: "HEADLAMP", part: "", qty: "", green: true },
];

function Note({ green }: { green: boolean }) {
  return (
    <svg viewBox="0 0 11 14" className="mx-auto h-[14px] w-[11px]">
      <path d="M.5 .5 H7 L10.500 4 V13.500 H.5Z" fill={green ? "#6fe07a" : "#e9f0fb"} stroke={green ? "#0b4d14" : "#33415e"} />
      <path d="M7 .5 V4 H10.500" fill="#fff" stroke={green ? "#0b4d14" : "#33415e"} />
      {green && <path d="M3 6.500 H8 M3 9 H8 M3 11.500 H8" stroke="#0b4d14" />}
    </svg>
  );
}

function Camera() {
  return (
    <svg viewBox="0 0 14 11" className="mx-auto h-[11px] w-[14px]">
      <path d="M0 2 H4 L5 0 H9 L10 2 H14 V11 H0Z" fill="#0c2a30" />
      <circle cx="7" cy="6.300" r="2.700" fill="none" stroke="#fff" strokeWidth="1.300" />
    </svg>
  );
}

function PartsTable() {
  const cell = "h-[17px] border-r border-b border-[#777] p-0 leading-4";
  return (
    <div className="flex h-[84px] shrink-0">
      <div className="min-w-0 flex-1 overflow-hidden border-b border-[#777] bg-white">
        <table className="w-full table-fixed border-separate border-spacing-0 border-l border-[#777] text-center text-xs">
          <colgroup>
            {columns.map((c) => (
              <col key={c.t} className={c.w} />
            ))}
          </colgroup>
          <thead>
            <tr>
              {columns.map((c) => (
                <th key={c.t} className="h-5 overflow-hidden border-r border-b border-r-[#c2c2c2] border-b-[#777] bg-[#b3b3b3] p-0 font-bold whitespace-nowrap">
                  {c.t}
                </th>
              ))}
            </tr>
          </thead>
          <tbody>
            {parts.map((p, i) => (
              <tr key={i} className={i % 2 ? "bg-[#efefef]" : "bg-white"}>
                <td className={cell}>{p.item}</td>
                <td className={clsx(cell, "pl-px text-left")}>{p.desc}</td>
                <td className={cell}>
                  {p.part && <a href="#part" className="text-[#1414c8] underline">{p.part}</a>}
                </td>
                <td className={cell}><Note green={p.green} /></td>
                <td className={cell}>{p.qty}</td>
                <td className={cell} />
                <td className={cell} />
                <td className={cell} />
                <td className={cell}>{p.qty && <Camera />}</td>
                <td className={cell}>EKG</td>
                <td className={cell}>DG6</td>
                <td className={cell}>J</td>
                <td className={cell}>M</td>
                <td className={cell}>74</td>
                <td className={clsx(cell, "pl-px text-left")}>*J5</td>
              </tr>
            ))}
          </tbody>
        </table>
      </div>
      <div className="flex w-[17px] shrink-0 flex-col items-center bg-[#f0f0f0] pt-6 text-[#505050]">
        <Chevron dir="up" />
        <div className="mt-1 h-2 w-[14px] bg-[#cdcdcd]" />
        <Chevron dir="down" className="mt-auto mb-1" />
      </div>
      <div className="w-[3px] shrink-0 bg-[#808080]" />
      <div className="w-[14px] shrink-0 bg-[#efefef] pt-[2px] pl-px">
        <button type="button" aria-label="Collapse table" className="block"><Chevron dir="down" className="block" /></button>
      </div>
    </div>
  );
}

/* ---------- page ---------- */

export default function App() {
  return (
    <div className="flex h-screen flex-col overflow-hidden bg-[#efefef] font-['Liberation_Sans',Arial,sans-serif] text-xs text-black">
      <FilterBar />
      <div className="flex min-h-0 flex-1">
        <Sidebar />
        <div className="w-[5px] shrink-0 border-l border-white bg-[#808080]" />
        <main className="flex min-w-0 flex-1 flex-col">
          <div className="flex min-h-0 flex-1">
            <div className="flex min-w-0 flex-1 flex-col">
              <ToolbarOne />
              <ToolbarTwo />
              <div className="flex h-6 shrink-0 items-center border-b border-[#8a8a8a]">
                <h1 className="flex-1 pt-[3px] text-center text-xs font-bold">008 - Electrical 1110 - Lamp, Front</h1>
                <div className="flex w-[65px] shrink-0 gap-[6px] pl-[5px]">
                  <Badge letter="M" green />
                  <Badge letter="C" />
                  <Badge letter="I" />
                </div>
              </div>
              <div className="flex min-h-0 flex-1 border-r border-[#8a8a8a]">
                <div className="min-w-0 flex-1 overflow-hidden bg-white pt-[3px] pl-[206px]">
                  <Diagram />
                </div>
                <div className="flex w-4 shrink-0 flex-col items-center bg-[#f0f0f0] text-[#505050]">
                  <Chevron dir="up" className="mt-1" />
                  <div className="mt-auto w-[14px] basis-[192px] bg-[#cdcdcd]" />
                  <Chevron dir="down" className="mt-[38px] mb-[5px]" />
                </div>
              </div>
            </div>
            <div className="w-[11px] shrink-0">
              <button type="button" aria-label="Expand toolbar" className="block h-4 pt-1"><Chevron dir="down" className="block" /></button>
            </div>
          </div>
          <div className="h-[3px] shrink-0 bg-[#808080]" />
          <PartsTable />
        </main>
        <div className="w-px shrink-0 bg-[#8a8a8a]" />
      </div>
      <div className="h-1 shrink-0 border-t border-[#c9dbe8] bg-[#41a4ee]" />
    </div>
  );
}
